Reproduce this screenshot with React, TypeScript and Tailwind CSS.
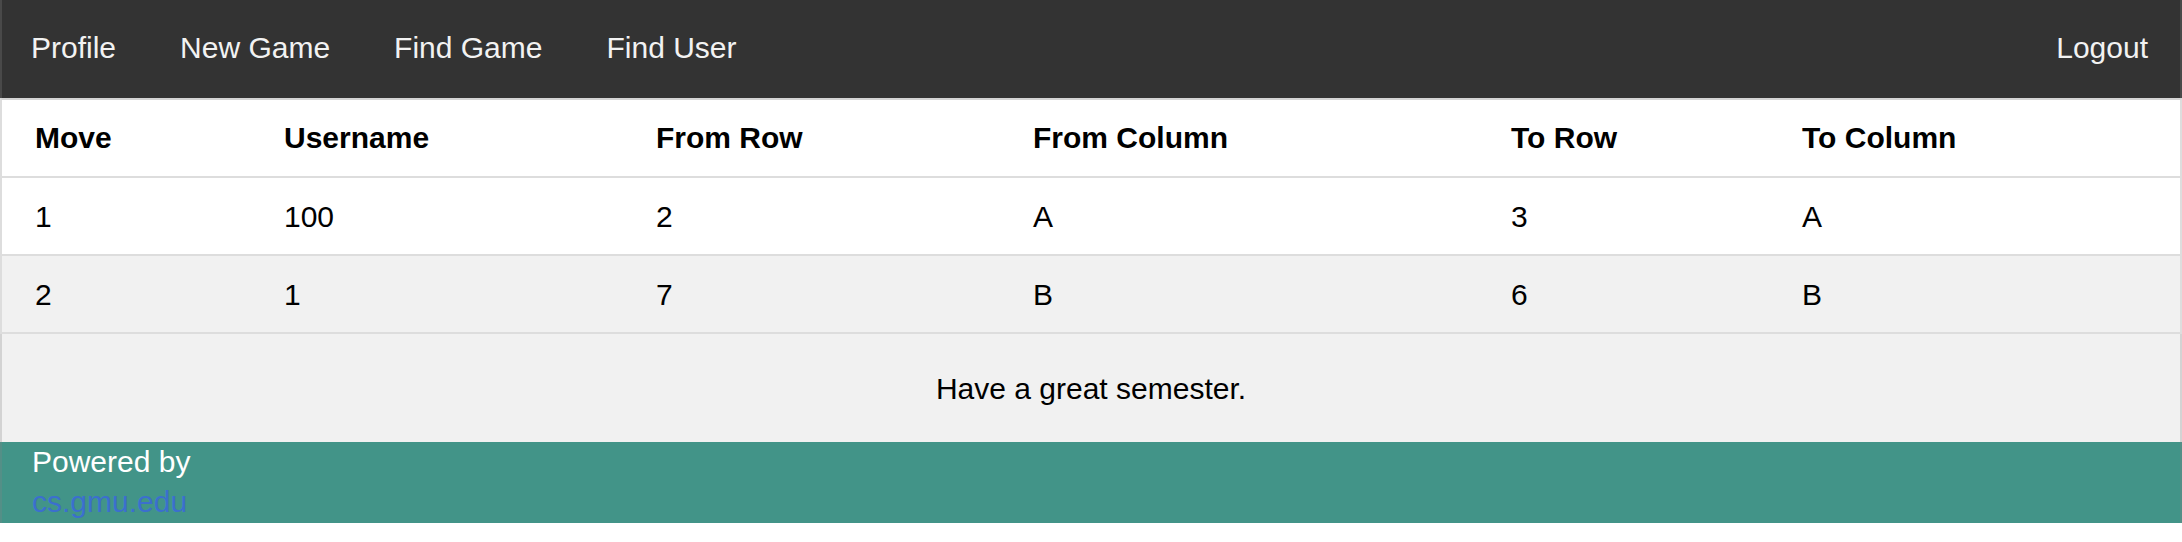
import React from "react";

const moves = [
  { move: "1", user: "100", fromRow: "2", fromCol: "A", toRow: "3", toCol: "A" },
  { move: "2", user: "1", fromRow: "7", fromCol: "B", toRow: "6", toCol: "B" },
];

const edge = "border-x-2 border-x-[rgba(133,133,133,0.28)]";
const gridCols = "grid grid-cols-[249px_372px_377px_478px_291px_1fr]";

export default function App() {
  return (
    <div className="min-h-screen bg-white font-['Liberation_Sans',Arial,sans-serif] text-[30px] text-black">
      {/* Top nav */}
      <nav className={`flex h-[98px] items-center bg-[#333333] pb-[3px] ${edge}`}>
        <div className="-ml-[3px] flex">
          {["Profile", "New Game", "Find Game", "Find User"].map((label) => (
            <a key={label} href="#" className="px-[32px] text-[#f2f2f2] no-underline">
              {label}
            </a>
          ))}
        </div>
        <a href="#" className="ml-auto px-[32px] text-[#f2f2f2] no-underline">
          Logout
        </a>
      </nav>

      {/* Moves table */}
      <div className={`border-t-2 border-t-[#d4d4d4] ${edge}`}>
        <div className={`${gridCols} h-[78px] items-center border-b-2 border-b-[#dddddd] bg-white pb-[2px] font-bold`}>
          <div className="pl-[33px]">Move</div>
          <div className="pl-[33px]">Username</div>
          <div className="pl-[33px]">From Row</div>
          <div className="pl-[33px]">From Column</div>
          <div className="pl-[33px]">To Row</div>
          <div className="pl-[33px]">To Column</div>
        </div>
        {moves.map((m, i) => (
          <div
            key={m.move}
            className={`${gridCols} h-[78px] items-center border-b-2 border-b-[#dddddd] ${
              i % 2 === 1 ? "bg-[#f1f1f1]" : "bg-white"
            }`}
          >
            <div className="pl-[33px]">{m.move}</div>
            <div className="pl-[33px]">{m.user}</div>
            <div className="pl-[33px]">{m.fromRow}</div>
            <div className="pl-[33px]">{m.fromCol}</div>
            <div className="pl-[33px]">{m.toRow}</div>
            <div className="pl-[33px]">{m.toCol}</div>
          </div>
        ))}
      </div>

      {/* Message */}
      <div className={`flex h-[108px] items-center justify-center bg-[#f1f1f1] ${edge}`}>
        Have a great semester.
      </div>

      {/* Footer */}
      <footer className={`h-[81px] bg-[#429488] pl-[30px] leading-[40px] text-white ${edge}`}>
        <div>Powered by</div>
        <a href="#" className="text-[#3b6fce] no-underline">
          cs.gmu.edu
        </a>
      </footer>
    </div>
  );
}
